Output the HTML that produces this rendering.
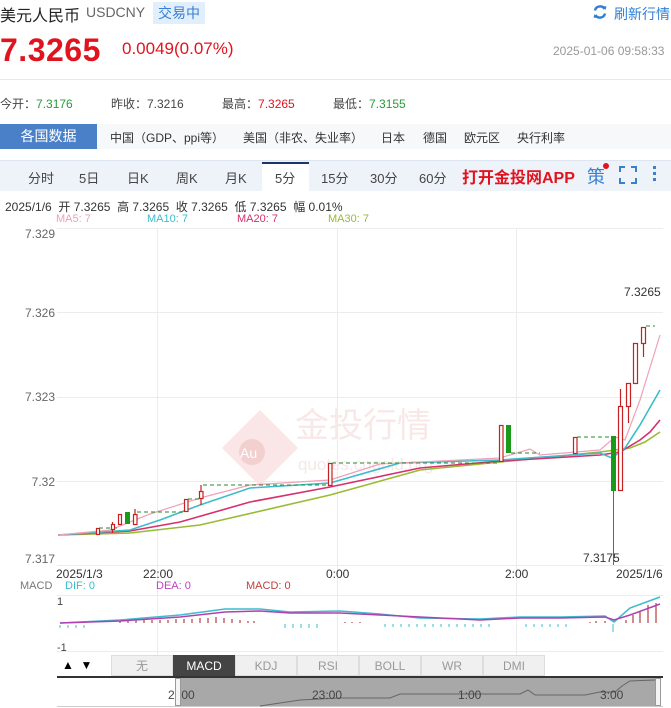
<!DOCTYPE html>
<html><head><meta charset="utf-8"><style>
*{margin:0;padding:0;box-sizing:border-box}
body{width:671px;height:708px;overflow:hidden;background:#fff;font-family:"Liberation Sans","Noto Sans CJK SC",sans-serif;color:#333;position:relative}
.a{position:absolute;white-space:nowrap}
</style></head><body>
<div class="a" style="left:0;top:2px;font-size:16px;color:#222">美元人民币</div>
<div class="a" style="left:86px;top:4px;font-size:14px;color:#666">USDCNY</div>
<div class="a" style="left:153px;top:2px;background:#e1eefb;color:#3a7fd0;font-size:14px;padding:1px 5px">交易中</div>
<svg class="a" style="left:592px;top:4px" width="16" height="16" viewBox="0 0 16 16"><path d="M3 6.5A5.2 5.2 0 0 1 12.6 5" stroke="#2f7fd8" stroke-width="2.4" fill="none"/><path d="M13 9.5A5.2 5.2 0 0 1 3.4 11" stroke="#2f7fd8" stroke-width="2.4" fill="none"/><path d="M11 2l3.5 0.5-1 3.5z" fill="#2f7fd8"/><path d="M5 14l-3.5-0.5 1-3.5z" fill="#2f7fd8"/></svg>
<div class="a" style="left:614px;top:4px;font-size:14px;color:#2f7fd8">刷新行情</div>
<div class="a" style="left:0;top:32px;font-size:32px;font-weight:bold;color:#e0141e;letter-spacing:0.5px">7.3265</div>
<div class="a" style="left:122px;top:39px;font-size:17px;color:#e0141e">0.0049(0.07%)</div>
<div class="a" style="left:553px;top:44px;font-size:12px;color:#999">2025-01-06 09:58:33</div>
<div class="a" style="left:0;top:79px;width:671px;height:1px;background:#e8e8e8"></div>
<div class="a" style="left:0;top:95px;font-size:12px;color:#444">今开：<span style="color:#2a9a3a">7.3176</span></div>
<div class="a" style="left:111px;top:95px;font-size:12px;color:#444">昨收：7.3216</div>
<div class="a" style="left:222px;top:95px;font-size:12px;color:#444">最高：<span style="color:#e0141e">7.3265</span></div>
<div class="a" style="left:333px;top:95px;font-size:12px;color:#444">最低：<span style="color:#2a9a3a">7.3155</span></div>
<div class="a" style="left:0;top:124px;width:671px;height:25px;background:#f7f8fa"></div>
<div class="a" style="left:0;top:124px;width:97px;height:25px;background:#4a80c8;color:#fff;font-size:14px;text-align:center;line-height:25px">各国数据</div>
<div class="a" style="left:110px;top:129px;font-size:12px;color:#333">中国（GDP、ppi等）</div>
<div class="a" style="left:243px;top:129px;font-size:12px;color:#333">美国（非农、失业率）</div>
<div class="a" style="left:381px;top:129px;font-size:12px;color:#333">日本</div>
<div class="a" style="left:423px;top:129px;font-size:12px;color:#333">德国</div>
<div class="a" style="left:464px;top:129px;font-size:12px;color:#333">欧元区</div>
<div class="a" style="left:517px;top:129px;font-size:12px;color:#333">央行利率</div>
<div class="a" style="left:0;top:160px;width:671px;height:31px;background:#eef3fa;border-top:1px solid #dde5f0"></div>
<div class="a" style="left:262px;top:162px;width:47px;height:29px;background:#fff;border-top:2px solid #1c3766"></div>
<div class="a" style="left:0;top:168px;font-size:13px;color:#444;width:671px">
<span class="a" style="left:28px">分时</span><span class="a" style="left:79px">5日</span><span class="a" style="left:127px">日K</span><span class="a" style="left:176px">周K</span><span class="a" style="left:225px">月K</span><span class="a" style="left:275px">5分</span><span class="a" style="left:321px">15分</span><span class="a" style="left:370px">30分</span><span class="a" style="left:419px">60分</span></div>
<div class="a" style="left:462px;top:164px;font-size:16px;font-weight:bold;color:#e0141e">打开金投网APP</div>
<div class="a" style="left:587px;top:163px;font-size:18px;color:#3a7fd0">策</div>
<div class="a" style="left:603px;top:163px;width:6px;height:6px;border-radius:3px;background:#e0141e"></div>
<svg class="a" style="left:619px;top:166px" width="18" height="18"><path d="M1 6V1h5M12 1h5v5M17 12v5h-5M6 17H1v-5" stroke="#3a7fd0" stroke-width="2" fill="none"/></svg>
<div class="a" style="left:653px;top:166px;width:3px;height:3px;background:#3a7fd0;box-shadow:0 6px 0 #3a7fd0,0 12px 0 #3a7fd0"></div>
<div class="a" style="left:5px;top:198px;font-size:12px;color:#333">2025/1/6&nbsp; 开 7.3265&nbsp; 高 7.3265&nbsp; 收 7.3265&nbsp; 低 7.3265&nbsp; 幅 0.01%</div>
<div class="a" style="left:56px;top:213px;font-size:11px;color:#f0a0b8">MA5: 7</div>
<div class="a" style="left:147px;top:213px;font-size:11px;color:#3cbccc">MA10: 7</div>
<div class="a" style="left:237px;top:213px;font-size:11px;color:#d6306e">MA20: 7</div>
<div class="a" style="left:328px;top:213px;font-size:11px;color:#99bb33">MA30: 7</div>
<svg class="a" style="left:0;top:0" width="671" height="708" font-family="Liberation Sans,sans-serif">
<g stroke="#ececec" stroke-width="1">
<line x1="57" y1="228.5" x2="663" y2="228.5"/><line x1="57" y1="312.5" x2="663" y2="312.5"/><line x1="57" y1="397.5" x2="663" y2="397.5"/><line x1="57" y1="481.5" x2="663" y2="481.5"/><line x1="57" y1="565.5" x2="663" y2="565.5"/>
<line x1="157.5" y1="228" x2="157.5" y2="655"/><line x1="337.5" y1="228" x2="337.5" y2="655"/><line x1="516.5" y1="228" x2="516.5" y2="655"/>
<line x1="57" y1="595.5" x2="663" y2="595.5"/><line x1="57" y1="651.5" x2="663" y2="651.5"/>
</g>
<g fill="#666" font-size="12" text-anchor="end"><text x="55" y="238">7.329</text><text x="55" y="317">7.326</text><text x="55" y="401">7.323</text><text x="55" y="486">7.32</text><text x="55" y="563">7.317</text></g>
<path d="M260 410l38 38-38 38-38-38z" fill="#fae6e6"/><circle cx="252" cy="452" r="13" fill="#f3d0d0"/><text x="240" y="458" fill="#fff" font-size="14">Au</text>
<text x="295" y="437" font-size="34" fill="#f8e8e8" font-family="Noto Sans CJK SC,sans-serif">金投行情</text>
<text x="298" y="470" font-size="17" fill="#f5e8e8">quotes.cngold.org</text>
<g fill="none" stroke-width="1.6">
<polyline stroke="#99bb33" points="58,535 130,533 200,525 330,495 420,470 500,462 600,452 630,448 645,442 660,432"/>
<polyline stroke="#d6306e" points="58,535 130,531 180,522 250,502 330,487 420,468 500,461 600,455 620,452 640,440 650,432 660,420"/>
<polyline stroke="#3cbccc" points="58,535 130,530 160,520 200,505 250,488 330,483 400,463 500,460 600,453 612,458 625,448 640,425 660,390"/>
<polyline stroke="#f0a0b8" stroke-width="1.2" points="58,535 110,530 150,514 200,498 250,485 330,480 380,464 500,458 530,449 540,455 600,450 615,437 625,440 640,400 660,335"/>
</g>
<g stroke="#2a8a2a" stroke-dasharray="4,3" stroke-width="1"><line x1="99" y1="528" x2="118" y2="528"/><line x1="137" y1="512" x2="185" y2="512"/><line x1="188" y1="499" x2="199" y2="499"/><line x1="203" y1="485" x2="328" y2="485"/><line x1="332" y1="463" x2="500" y2="463"/><line x1="511" y1="453" x2="540" y2="453"/><line x1="577" y1="437" x2="611" y2="437"/><line x1="646" y1="326" x2="655" y2="326"/></g>
<g stroke="#c82020" fill="#fff" stroke-width="1.2">
<line x1="112.5" y1="522" x2="112.5" y2="533"/><line x1="135" y1="509" x2="135" y2="524"/><line x1="201" y1="485" x2="201" y2="505"/><line x1="620.5" y1="389" x2="620.5" y2="406"/><line x1="628.5" y1="406" x2="628.5" y2="423"/><line x1="643.5" y1="343" x2="643.5" y2="357"/>
<rect x="96.5" y="528.5" width="3" height="6"/><rect x="111.5" y="524.5" width="3" height="5"/><rect x="118.5" y="514.5" width="3" height="10"/><rect x="133.5" y="514.5" width="3.5" height="10"/><rect x="184.5" y="499.5" width="3.5" height="12"/><rect x="199.5" y="491.5" width="3.5" height="7"/><rect x="328.5" y="463.5" width="3.5" height="22"/><rect x="499.5" y="425.5" width="3.5" height="36"/><rect x="573.5" y="437.5" width="3.5" height="16"/><rect x="618.5" y="406.5" width="4" height="84"/><rect x="626.5" y="383.5" width="4" height="23"/><rect x="633.5" y="343.5" width="4" height="40"/><rect x="641.5" y="327.5" width="4" height="16"/>
</g>
<g fill="#1a9a1a"><rect x="125" y="512" width="5" height="12"/><rect x="506" y="425" width="5" height="28"/><rect x="611" y="436" width="5" height="55"/><rect x="613" y="490" width="1" height="75"/></g>
<text x="583" y="562" font-size="12" fill="#333">7.3175</text>
<text x="624" y="296" font-size="12" fill="#333">7.3265</text>
<g font-size="12" fill="#333"><text x="56" y="578">2025/1/3</text><text x="143" y="578">22:00</text><text x="326" y="578">0:00</text><text x="505" y="578">2:00</text><text x="616" y="578">2025/1/6</text></g>
<g font-size="11"><text x="20" y="589" fill="#777">MACD</text><text x="65" y="589" fill="#3cbccc">DIF: 0</text><text x="156" y="589" fill="#c040c0">DEA: 0</text><text x="246" y="589" fill="#c04040">MACD: 0</text></g>
<g font-size="11" fill="#444"><text x="57" y="605">1</text><text x="57" y="651">-1</text></g>
<g stroke="#a01818" stroke-width="1"><path d="M120 623v-3M128 623v-3M136 623v-3M144 623v-3M152 623v-3M160 623v-3M168 623v-3M176 623v-4M184 623v-4M192 623v-4M200 623v-5M208 623v-5M216 623v-6M224 623v-5M232 623v-4M240 623v-3M248 623v-2M254 623v-2M345 623v-1M352 623v-1M360 623v-1M590 623v-1M596 623v-2M605 623v-2M626 623v-3M633 623v-8M640 623v-12M648 623v-18M656 623v-20"/></g>
<g stroke="#3cbccc" stroke-width="1"><path d="M60 625v3M68 625v3M76 625v3M84 625v3M285 624v4M293 624v4M301 624v4M309 624v4M317 624v4M385 624v3M393 624v3M401 624v3M409 624v3M417 624v3M425 624v3M433 624v3M441 624v3M449 624v3M457 624v3M465 624v3M473 624v3M481 624v3M489 624v3M526 624v3M534 624v3M542 624v3M550 624v3M558 624v3M566 624v3M613 624v8"/></g>
<polyline fill="none" stroke="#3cbccc" stroke-width="1.5" points="60,623 120,620 180,615 225,609 260,609 290,612 340,611 380,614 420,618 480,619 520,617 560,617 605,616 614,622 630,608 660,597"/>
<polyline fill="none" stroke="#b040b0" stroke-width="1.5" points="60,623 120,621 180,617 225,612 260,611 290,613 340,613 380,615 420,617 480,620 520,618 560,618 605,617 614,620 630,615 660,604"/>
</svg>
<div class="a" style="left:57px;top:655px;width:54px;height:21px;font-size:12px;color:#000;line-height:21px;padding-left:5px">▲ &nbsp;▼</div>
<div class="a" style="left:111px;top:655px;height:21px;display:flex;font-size:12px;line-height:20px;color:#999">
<div style="width:62px;text-align:center;background:#f0f0f0;border:1px solid #ddd">无</div><div style="width:62px;text-align:center;background:#444;color:#fff;border:1px solid #444">MACD</div><div style="width:62px;text-align:center;background:#f0f0f0;border:1px solid #ddd">KDJ</div><div style="width:62px;text-align:center;background:#f0f0f0;border:1px solid #ddd">RSI</div><div style="width:62px;text-align:center;background:#f0f0f0;border:1px solid #ddd">BOLL</div><div style="width:62px;text-align:center;background:#f0f0f0;border:1px solid #ddd">WR</div><div style="width:62px;text-align:center;background:#f0f0f0;border:1px solid #ddd">DMI</div></div>
<div class="a" style="left:57px;top:676px;width:606px;height:2px;background:#333"></div>
<div class="a" style="left:57px;top:706px;width:606px;height:1px;background:#ccc"></div>
<div class="a" style="left:181px;top:678px;width:474px;height:28px;background:#a8a8a8"></div>
<div class="a" style="left:175px;top:678px;width:6px;height:28px;background:#f4f4f4;border:1px solid #999"></div>
<div class="a" style="left:655px;top:678px;width:6px;height:28px;background:#f4f4f4;border:1px solid #999"></div>
<svg class="a" style="left:0;top:678px" width="671" height="30"><polyline fill="none" stroke="#666" stroke-width="1" points="260,28 300,22 340,20 390,20 400,16 470,16 520,16 528,12 535,17 585,17 600,14 615,14 622,8 630,3 655,2"/></svg>
<div class="a" style="left:168px;top:688px;font-size:12px;color:#444">2 &nbsp;00</div>
<div class="a" style="left:312px;top:688px;font-size:12px;color:#444">23:00</div>
<div class="a" style="left:458px;top:688px;font-size:12px;color:#444">1:00</div>
<div class="a" style="left:600px;top:688px;font-size:12px;color:#444">3:00</div>
</body></html>
